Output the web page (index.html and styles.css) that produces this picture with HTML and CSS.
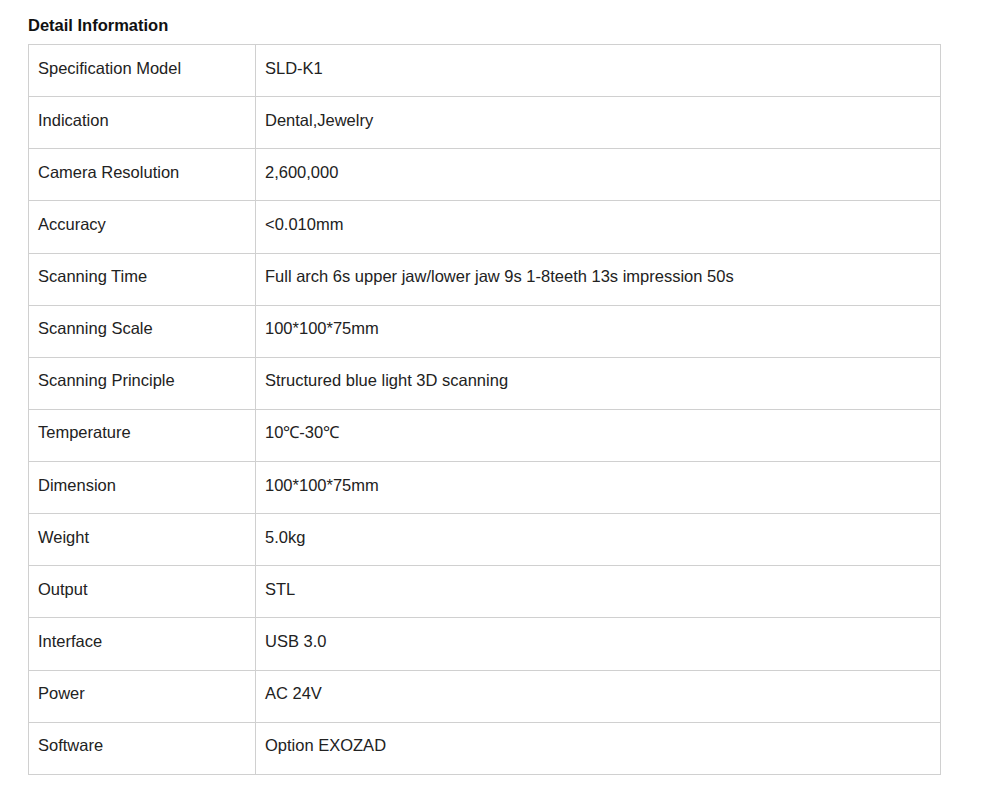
FILE: index.html
```html
<!DOCTYPE html>
<html>
<head>
<meta charset="utf-8">
<link rel="stylesheet" href="styles.css">
</head>
<body>
<div class="wrap">
  <h2 class="title">Detail Information</h2>
  <table class="spec">
    <tr><td class="k">Specification Model</td><td>SLD-K1</td></tr>
    <tr><td class="k">Indication</td><td>Dental,Jewelry</td></tr>
    <tr><td class="k">Camera Resolution</td><td>2,600,000</td></tr>
    <tr><td class="k">Accuracy</td><td>&lt;0.010mm</td></tr>
    <tr><td class="k">Scanning Time</td><td>Full arch 6s upper jaw/lower jaw 9s 1-8teeth 13s impression 50s</td></tr>
    <tr><td class="k">Scanning Scale</td><td>100*100*75mm</td></tr>
    <tr><td class="k">Scanning Principle</td><td>Structured blue light 3D scanning</td></tr>
    <tr><td class="k">Temperature</td><td>10℃-30℃</td></tr>
    <tr><td class="k">Dimension</td><td>100*100*75mm</td></tr>
    <tr><td class="k">Weight</td><td>5.0kg</td></tr>
    <tr><td class="k">Output</td><td>STL</td></tr>
    <tr><td class="k">Interface</td><td>USB 3.0</td></tr>
    <tr><td class="k">Power</td><td>AC 24V</td></tr>
    <tr><td class="k">Software</td><td>Option EXOZAD</td></tr>
  </table>
</div>
</body>
</html>
```
FILE: styles.css
```css
html, body {
  margin: 0;
  padding: 0;
  background: #fff;
}
body {
  font-family: "Liberation Sans", Arial, sans-serif;
  color: #222;
}
.wrap {
  padding: 16px 0 0 28px;
}
.title {
  margin: 0 0 9px 0;
  font-size: 16.5px;
  font-weight: bold;
  color: #111;
  line-height: 19px;
}
.spec {
  border-collapse: collapse;
  width: 913px;
  font-size: 16.5px;
}
.spec td {
  border: 1px solid #d0d0d0;
  height: 52.14px;
  padding: 0 9px 6px 9px;
  line-height: 18px;
  vertical-align: middle;
  box-sizing: border-box;
}
.spec td.k {
  width: 227px;
}
```
